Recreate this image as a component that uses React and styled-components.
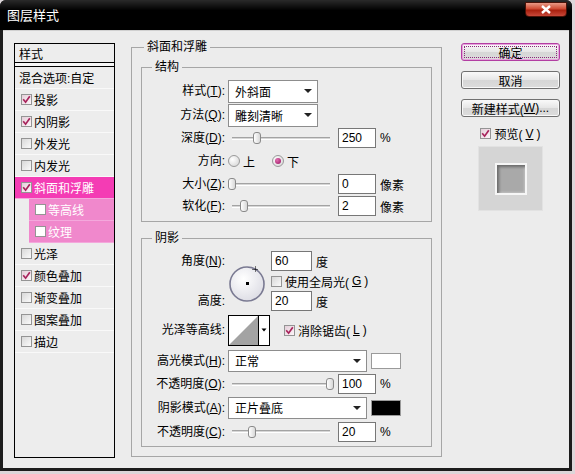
import styled, { createGlobalStyle } from "styled-components";

const GlobalStyle = createGlobalStyle`
  html, body { margin: 0; padding: 0; background: #ddd6d9; }
  body {
    font-family: "Liberation Sans", "Noto Sans CJK SC", sans-serif;
    font-size: 12px;
    color: #000;
  }
  * { box-sizing: border-box; }
`;

const Window = styled.div`
  width: 572px;
  height: 471px;
  background: #1c1c1c;
  border-radius: 6px 6px 0 0;
  display: flex;
  flex-direction: column;
  overflow: hidden;
`;

const TitleBar = styled.div`
  height: 30px;
  flex: none;
  display: flex;
  align-items: flex-start;
  justify-content: space-between;
  padding: 0 5px 0 7px;
  background: linear-gradient(#2a2a2a, #000 35%);
  color: #fff;
  font-size: 13px;
`;

const Title = styled.span`
  margin-top: 9px;
  line-height: 14px;
`;

const CloseBtn = styled.div`
  width: 42px;
  height: 15px;
  margin-top: 2px;
  border: 1px solid #4a1208;
  border-radius: 0 0 4px 4px;
  background: linear-gradient(#e89a86 0%, #cf4a32 45%, #a8200e 55%, #c8483a 100%);
  display: flex;
  align-items: center;
  justify-content: center;
`;

const Body = styled.div`
  flex: 1;
  margin: 0 3px 3px;
  background: #ececec;
  border-top: 1px solid #d0d0d0;
  display: flex;
  align-items: flex-start;
  padding: 12px 0 0 11px;
`;

/* ---------- left list ---------- */

const StyleList = styled.div`
  width: 101px;
  height: 415px;
  flex: none;
  border: 1px solid #000;
  background: #ededed;
`;

const ListHead = styled.div`
  height: 19px;
  padding-left: 4px;
  display: flex;
  align-items: center;
  border-bottom: 1px solid #000;
`;

const ListRule = styled.div`
  height: 4px;
  border-bottom: 1px solid #000;
  background: #f6f6f6;
`;

const Item = styled.div`
  height: 22px;
  display: flex;
  align-items: center;
  gap: 2px;
  margin-left: ${(p) => (p.$sub ? 14 : 0)}px;
  padding-left: ${(p) => (p.$plain ? 4 : 6)}px;
  background: ${(p) => (p.$active ? "#f43cb4" : p.$sub ? "#f088cc" : "transparent")};
  color: ${(p) => (p.$active || p.$sub ? "#fff" : "#000")};
  border-bottom: 1px solid ${(p) => (p.$active || p.$sub ? "#f4a8dc" : "#f9f9f9")};
  white-space: nowrap;
`;

/* ---------- form bits ---------- */

const Group = styled.fieldset`
  margin: ${(p) => p.$m || "0"};
  padding: ${(p) => p.$p || "0"};
  width: ${(p) => p.$w}px;
  height: ${(p) => (p.$h ? `${p.$h}px` : "auto")};
  min-width: 0;
  border: 1px solid #a6a6a6;
  flex: none;
`;

const Legend = styled.legend`
  margin-left: ${(p) => p.$ml}px;
  padding: 0 3px;
  line-height: 14px;
  height: 14px;
`;

const Row = styled.div`
  display: flex;
  align-items: center;
  height: ${(p) => p.$h}px;
`;

const Label = styled.span`
  width: 86px;
  flex: none;
  text-align: right;
  padding-right: 3px;
  white-space: nowrap;
  line-height: ${(p) => p.$lh || 14}px;
`;

const Select = styled.div`
  width: ${(p) => p.$w}px;
  height: ${(p) => p.$h || 23}px;
  flex: none;
  background: #fff;
  border: 1px solid #8d8d8d;
  display: flex;
  align-items: center;
  justify-content: space-between;
  padding: 0 5px 0 6px;
`;

const Arrow = styled.span`
  width: 0;
  height: 0;
  border-left: 4px solid transparent;
  border-right: 4px solid transparent;
  border-top: 4px solid #222;
`;

const SliderBox = styled.div`
  position: relative;
  width: 106px;
  height: 14px;
  flex: none;
  margin-right: 4px;
  display: flex;
  align-items: center;
`;

const Track = styled.div`
  flex: 1;
  margin: 0 4px;
  height: 3px;
  border-top: 1px solid #a3a3a3;
  border-bottom: 1px solid #fff;
  background: #d6d6d6;
`;

const Thumb = styled.div`
  position: absolute;
  top: 1px;
  width: 8px;
  height: 12px;
  border: 1px solid #8a8a8a;
  border-radius: 3px;
  background: linear-gradient(90deg, #fff, #d8d8d8);
`;

const Field = styled.div`
  width: ${(p) => p.$w || 38}px;
  height: 20px;
  flex: none;
  background: #fff;
  border: 1px solid #777;
  padding-left: 3px;
  display: flex;
  align-items: center;
`;

const Unit = styled.span`
  margin-left: 4px;
`;

const Radio = styled.span`
  width: 12px;
  height: 12px;
  flex: none;
  border-radius: 50%;
  border: 1px solid #9a9a9a;
  background: radial-gradient(circle at 35% 35%, #fff, #d2d2d2);
  display: flex;
  align-items: center;
  justify-content: center;
  &::after {
    content: "";
    display: ${(p) => (p.$on ? "block" : "none")};
    width: 6px;
    height: 6px;
    border-radius: 50%;
    background: radial-gradient(circle at 35% 35%, #e070b0, #9a1060);
  }
`;

const RadioText = styled.span`
  margin: 0 ${(p) => p.$mr || 0}px 0 3px;
`;

const BoxRow = styled.div`
  display: flex;
  align-items: center;
  gap: 3px;
  margin-left: ${(p) => p.$ml || 0}px;
  white-space: nowrap;
`;

const CheckSquare = styled.span`
  width: 11px;
  height: 11px;
  flex: none;
  border: 1px solid #949494;
  background: ${(p) =>
    p.$white ? "#fff" : p.$on ? "linear-gradient(135deg,#e4cfd9,#fdf5f9)" : "linear-gradient(135deg,#d8d8d8,#fafafa)"};
  display: flex;
  align-items: center;
  justify-content: center;
`;

const Swatch = styled.div`
  width: 30px;
  height: 16px;
  flex: none;
  margin-left: 4px;
  border: 1px solid #9a9a9a;
  background: ${(p) => p.$c};
`;

const AngleBlock = styled.div`
  display: flex;
  height: 60px;
`;

const LabelCol = styled.div`
  display: flex;
  flex-direction: column;
  justify-content: space-between;
`;

const Dial = styled.div`
  margin-top: 14px;
  width: 38px;
  height: 38px;
  flex: none;
`;

const FieldCol = styled.div`
  margin-left: 5px;
  display: flex;
  flex-direction: column;
`;

const FieldRow = styled.div`
  height: 20px;
  display: flex;
  align-items: center;
`;

/* ---------- right column ---------- */

const Side = styled.div`
  width: 99px;
  flex: none;
  margin-left: 19px;
  display: flex;
  flex-direction: column;
  align-items: center;
`;

const Button = styled.div`
  position: relative;
  width: 99px;
  height: 18px;
  margin-bottom: 10px;
  border: 1px solid ${(p) => (p.$primary ? "#b23ea2" : "#707070")};
  border-radius: 3px;
  background: linear-gradient(#fafafa, #e6e6e6 50%, #d6d6d6 51%, #dcdcdc);
  box-shadow: ${(p) => (p.$primary ? "inset 0 0 0 1px #e7a2dc" : "inset 0 0 0 1px #f8f8f8")};
  display: flex;
  align-items: center;
  justify-content: center;
  white-space: nowrap;
  &::after {
    content: "";
    display: ${(p) => (p.$primary ? "block" : "none")};
    position: absolute;
    inset: 2px;
    border: 1px dotted #8a2a7a;
  }
`;

const PreviewToggle = styled.div`
  margin-top: -4px;
  height: 21px;
  display: flex;
  align-items: center;
  gap: 3px;
`;

const Preview = styled.div`
  margin-top: 2px;
  width: 65px;
  height: 65px;
  background: #d5d5d5;
  border: 1px solid #e2e2e2;
  display: flex;
  align-items: center;
  justify-content: center;
`;

const PreviewSquare = styled.div`
  width: 32px;
  height: 32px;
  border: 2px solid #f6f6f6;
  background: #a9a9a9;
  box-shadow: inset 2px 2px 3px #6a6a6a, inset -1px -1px 2px #c4c4c4;
`;

/* ---------- helpers ---------- */

const Check = ({ on, white }) => (
  <CheckSquare $on={on} $white={white}>
    {on && (
      <svg width="9" height="9" viewBox="0 0 9 9">
        <path d="M1.2 4.2 L3.6 7.2 L7.8 1.2" fill="none" stroke="#a8245c" strokeWidth="1.7" />
      </svg>
    )}
  </CheckSquare>
);

const Slider = ({ value, max }) => (
  <SliderBox>
    <Track />
    <Thumb style={{ left: `${(value / max) * 98}px` }} />
  </SliderBox>
);

const listItems = [
  { t: "投影", on: true },
  { t: "内阴影", on: true },
  { t: "外发光" },
  { t: "内发光" },
  { t: "斜面和浮雕", on: true, active: true },
  { t: "等高线", sub: true },
  { t: "纹理", sub: true },
  { t: "光泽" },
  { t: "颜色叠加", on: true },
  { t: "渐变叠加" },
  { t: "图案叠加" },
  { t: "描边" },
];

export default function App() {
  return (
    <>
      <GlobalStyle />
      <Window>
        <TitleBar>
          <Title>图层样式</Title>
          <CloseBtn>
            <svg width="12" height="9" viewBox="0 0 12 9">
              <path d="M2 1 L10 8 M10 1 L2 8" stroke="#fff" strokeWidth="2.4" />
            </svg>
          </CloseBtn>
        </TitleBar>

        <Body>
          <StyleList>
            <ListHead>样式</ListHead>
            <ListRule />
            <Item $plain>混合选项:自定</Item>
            {listItems.map((it) => (
              <Item key={it.t} $active={it.active} $sub={it.sub}>
                <Check on={it.on} white={it.sub} />
                {it.t}
              </Item>
            ))}
          </StyleList>

          <Group $w={311} $h={417} $m="-3px 0 0 16px">
            <Legend $ml={12}>斜面和浮雕</Legend>

            <Group $w={291} $m="6px 0 0 9px" $p="5px 0 4px 0">
              <Legend $ml={10}>结构</Legend>
              <Row $h={24}>
                <Label>样式(<u>T</u>):</Label>
                <Select $w={90}>外斜面<Arrow /></Select>
              </Row>
              <Row $h={24}>
                <Label>方法(<u>Q</u>):</Label>
                <Select $w={90}>雕刻清晰<Arrow /></Select>
              </Row>
              <Row $h={22}>
                <Label>深度(<u>D</u>):</Label>
                <Slider value={250} max={1000} />
                <Field>250</Field>
                <Unit>%</Unit>
              </Row>
              <Row $h={24}>
                <Label>方向:</Label>
                <Radio />
                <RadioText $mr={17}>上</RadioText>
                <Radio $on />
                <RadioText>下</RadioText>
              </Row>
              <Row $h={22}>
                <Label>大小(<u>Z</u>):</Label>
                <Slider value={0} max={250} />
                <Field>0</Field>
                <Unit>像素</Unit>
              </Row>
              <Row $h={22}>
                <Label>软化(<u>F</u>):</Label>
                <Slider value={2} max={16} />
                <Field>2</Field>
                <Unit>像素</Unit>
              </Row>
            </Group>

            <Group $w={291} $m="9px 0 0 9px" $p="6px 0 2px 0">
              <Legend $ml={10}>阴影</Legend>
              <AngleBlock>
                <LabelCol>
                  <Label $lh={20}>角度(<u>N</u>):</Label>
                  <Label $lh={20}>高度:</Label>
                </LabelCol>
                <Dial>
                  <svg width="38" height="38" viewBox="0 0 38 38">
                    <defs>
                      <radialGradient id="dialFill" cx="40%" cy="35%" r="70%">
                        <stop offset="0" stopColor="#ffffff" />
                        <stop offset="1" stopColor="#dcdce4" />
                      </radialGradient>
                    </defs>
                    <circle cx="19" cy="19" r="17" fill="url(#dialFill)" stroke="#7a7a92" strokeWidth="1.6" />
                    <rect x="18" y="17" width="3" height="3" fill="#000" />
                    <path d="M27.5 1.5v6M24.5 4.5h6" stroke="#000" strokeWidth="1" strokeDasharray="1 1" />
                  </svg>
                </Dial>
                <FieldCol>
                  <FieldRow>
                    <Field $w={41}>60</Field>
                    <Unit>度</Unit>
                  </FieldRow>
                  <FieldRow>
                    <BoxRow>
                      <Check />
                      使用全局光(<u>G</u>)
                    </BoxRow>
                  </FieldRow>
                  <FieldRow>
                    <Field $w={41}>20</Field>
                    <Unit>度</Unit>
                  </FieldRow>
                </FieldCol>
              </AngleBlock>

              <Row $h={38}>
                <Label>光泽等高线:</Label>
                <svg width="42" height="31" viewBox="0 0 42 31">
                  <rect x="0.5" y="0.5" width="41" height="30" fill="#fff" stroke="#000" />
                  <polygon points="1,30 30,1 30,30" fill="#a3a3a3" />
                  <line x1="30.5" y1="0" x2="30.5" y2="31" stroke="#000" />
                  <polygon points="33.5,13.5 38.5,13.5 36,16.5" fill="#000" />
                </svg>
                <BoxRow $ml={14}>
                  <Check on />
                  消除锯齿(<u>L</u>)
                </BoxRow>
              </Row>

              <Row $h={23}>
                <Label>高光模式(<u>H</u>):</Label>
                <Select $w={139} $h={22}>正常<Arrow /></Select>
                <Swatch $c="#fff" />
              </Row>
              <Row $h={24}>
                <Label>不透明度(<u>O</u>):</Label>
                <Slider value={100} max={100} />
                <Field>100</Field>
                <Unit>%</Unit>
              </Row>
              <Row $h={23}>
                <Label>阴影模式(<u>A</u>):</Label>
                <Select $w={139} $h={22}>正片叠底<Arrow /></Select>
                <Swatch $c="#000" />
              </Row>
              <Row $h={25}>
                <Label>不透明度(<u>C</u>):</Label>
                <Slider value={20} max={100} />
                <Field>20</Field>
                <Unit>%</Unit>
              </Row>
            </Group>
          </Group>

          <Side>
            <Button $primary>确定</Button>
            <Button>取消</Button>
            <Button>新建样式(<u>W</u>)...</Button>
            <PreviewToggle>
              <Check on />
              预览(<u>V</u>)
            </PreviewToggle>
            <Preview>
              <PreviewSquare />
            </Preview>
          </Side>
        </Body>
      </Window>
    </>
  );
}
